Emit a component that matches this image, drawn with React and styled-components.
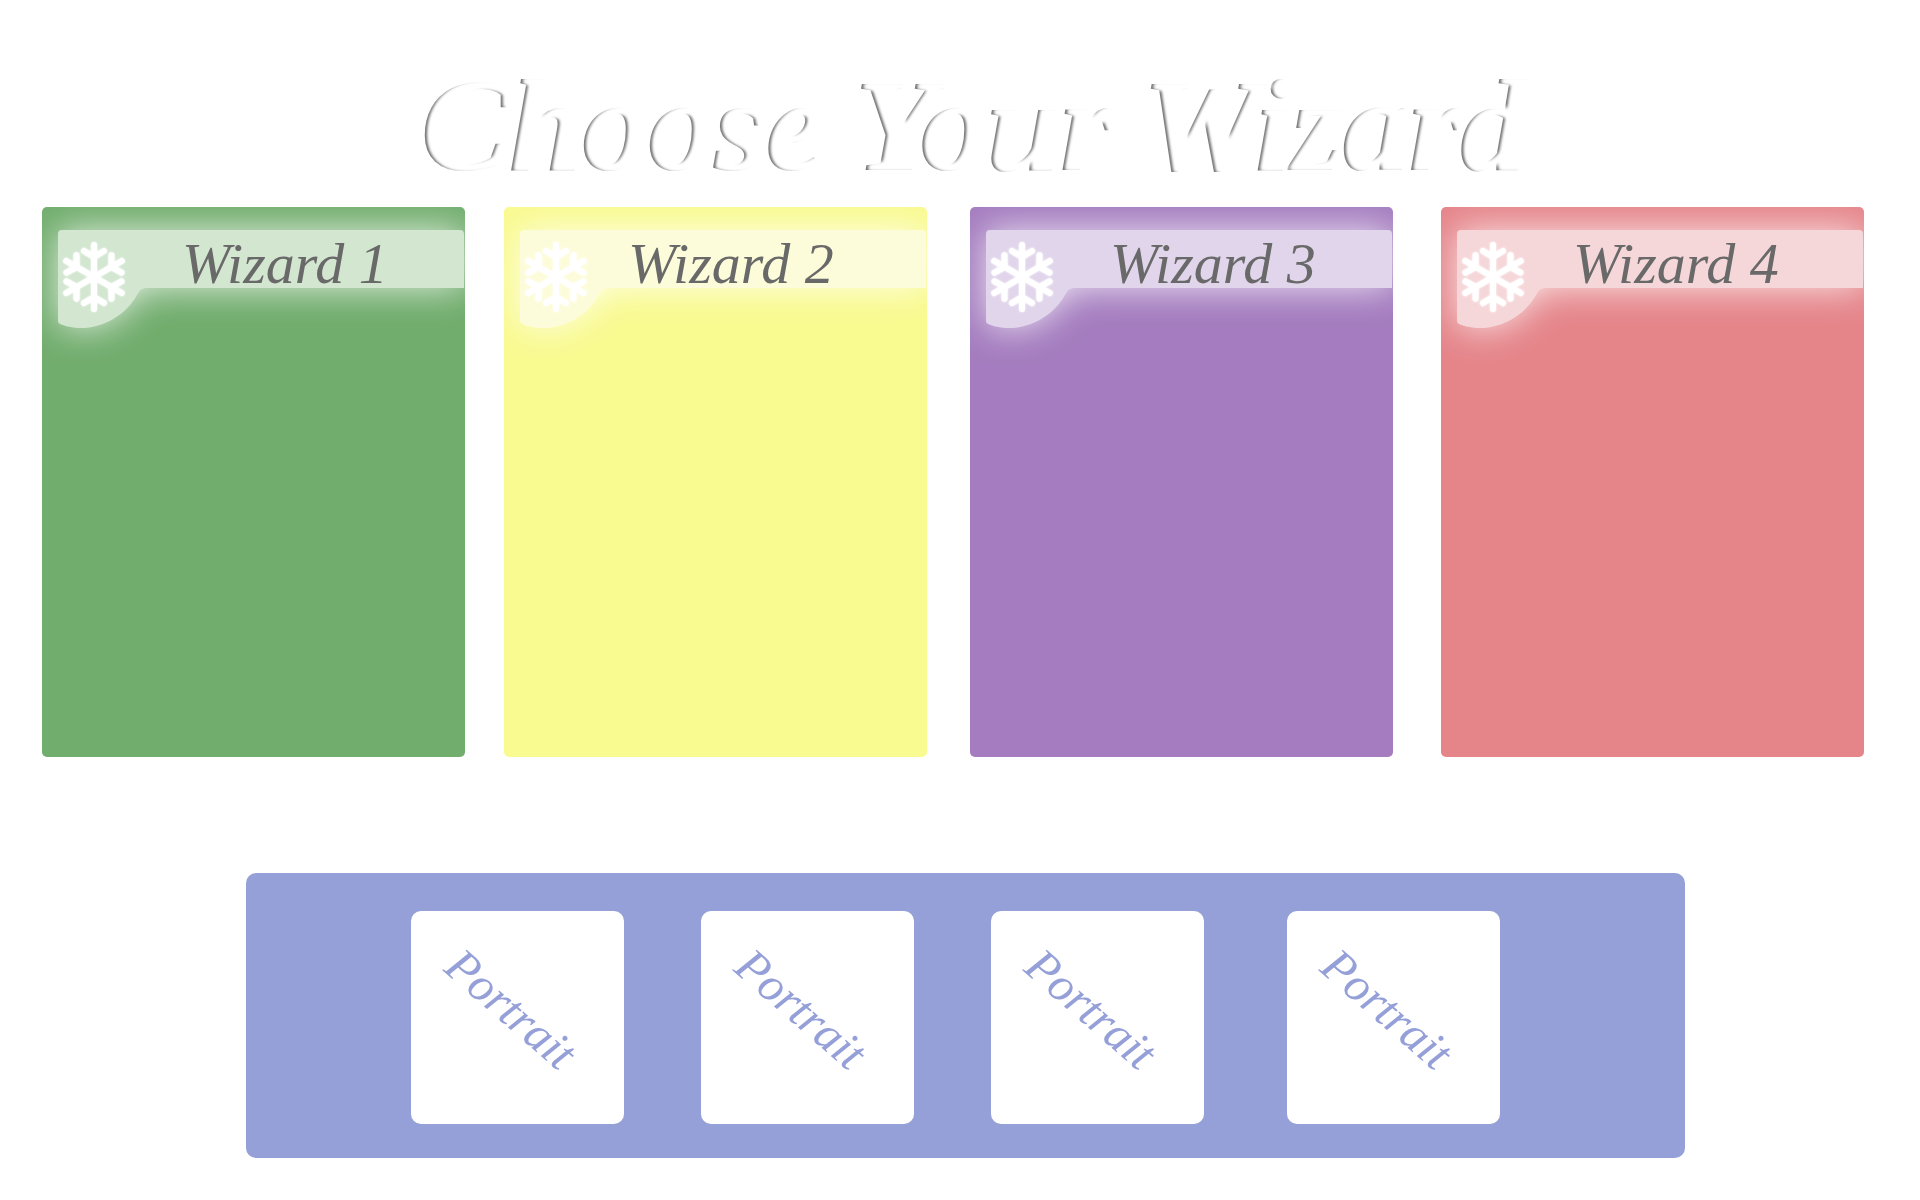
import React from "react";
import styled, { createGlobalStyle } from "styled-components";

const script = '"Liberation Serif", serif';

const GlobalStyle = createGlobalStyle`
  *, *::before, *::after { box-sizing: border-box; }
  body { margin: 0; background: #fff; font-family: ${script}; }
`;

const Page = styled.main`
  display: flex;
  flex-direction: column;
  padding: 48px 56px 42px 42px;
`;

const Title = styled.h1`
  margin: 0 0 0 40px;
  align-self: center;
  padding: 0 16px;
  font-size: 132px;
  font-style: italic;
  font-weight: 700;
  line-height: 155px;
  padding-bottom: 4px;
  white-space: nowrap;
  color: transparent;
  background: #707070;
  background-clip: text;
  -webkit-background-clip: text;
  text-shadow: 5px -1px 4px #fff, 4px -1px 4px #fff, 3px 0 3px #fff;
`;

const Cards = styled.ul`
  display: flex;
  margin: 0;
  padding: 0;
  list-style: none;
`;

const Card = styled.li`
  flex: 1;
  height: 550px;
  margin-right: ${(p) => p.$space}px;
  border-radius: 5px;
  overflow: hidden;
  background: ${(p) => p.$color};
`;

const CardHeader = styled.header`
  display: grid;
  grid-template-columns: 16px minmax(0, 1fr);
  padding-top: 23px;
`;

const Ribbon = styled.div`
  grid-area: 1 / 2;
  display: flex;
  height: 98px;
  filter: drop-shadow(0 0 18px rgba(255, 255, 255, 0.8));
`;

const RibbonCurl = styled.svg`
  flex: none;
  width: 90px;
  height: 98px;
  fill: ${(p) => p.$color};
`;

const RibbonBar = styled.div`
  flex: 1;
  height: 58px;
  margin-right: 1px;
  border-top-right-radius: 4px;
  background: ${(p) => p.$color};
`;

const Label = styled.div`
  grid-area: 1 / 1 / 2 / 3;
  z-index: 1;
  display: flex;
  height: 58px;
`;

const Flake = styled.svg`
  flex: none;
  width: 64px;
  height: 72px;
  margin: 11px 0 0 20px;
  stroke: #fff;
  fill: none;
  filter: drop-shadow(0 0 1px #fff);
`;

const Name = styled.h2`
  margin: 0 0 0 ${(p) => p.$inset}px;
  font-size: 58px;
  font-style: italic;
  font-weight: 400;
  line-height: 68px;
  white-space: nowrap;
  color: #696969;
`;

const Tray = styled.section`
  display: flex;
  justify-content: center;
  margin: 116px 179px 0 204px;
  padding: 38px 20px 34px 0;
  border-radius: 10px;
  background: #95a0d8;
`;

const Portrait = styled.button`
  display: grid;
  place-items: center;
  width: 213px;
  height: 213px;
  margin: 0 ${(p) => p.$space}px 0 0;
  padding: 0 12px 18px 0;
  border: 0;
  border-radius: 10px;
  background: #fff;
  color: #95a0d8;
  font: italic 48px ${script};
`;

const Slanted = styled.span`
  transform: rotate(41deg);
`;

const wizards = [
  { name: "Wizard 1", color: "#71ad6d", ribbon: "#d2e6d0", inset: 56, space: 39 },
  { name: "Wizard 2", color: "#f9fa8f", ribbon: "#fdfcda", inset: 40, space: 43 },
  { name: "Wizard 3", color: "#a47cbf", ribbon: "#e1d5eb", inset: 56, space: 48 },
  { name: "Wizard 4", color: "#e5858a", ribbon: "#f6d7d9", inset: 48, space: 0 },
];

const portraitSpaces = [77, 77, 83, 0];

function Snowflake() {
  return (
    <Flake viewBox="-32 -36 64 72" strokeWidth="6" strokeLinecap="round" aria-hidden="true">
      {[0, 60, 120, 180, 240, 300].map((angle) => (
        <g key={angle} transform={`rotate(${angle})`}>
          <path d="M0 0V-32M-10 -26L0 -20L10 -26" />
        </g>
      ))}
    </Flake>
  );
}

export default function App() {
  return (
    <>
      <GlobalStyle />
      <Page>
        <Title>Choose Your Wizard</Title>
        <Cards>
          {wizards.map((w) => (
            <Card key={w.name} $color={w.color} $space={w.space}>
              <CardHeader>
                <Ribbon>
                  <RibbonCurl $color={w.ribbon} viewBox="0 0 90 98" aria-hidden="true">
                    <path d="M4 0H90V58C83 58 82 60 79 65C64 91 38 98 24 98C14 98 7 96 2 94Q0 93 0 91V4Q0 0 4 0Z" />
                  </RibbonCurl>
                  <RibbonBar $color={w.ribbon} />
                </Ribbon>
                <Label>
                  <Snowflake />
                  <Name $inset={w.inset}>{w.name}</Name>
                </Label>
              </CardHeader>
            </Card>
          ))}
        </Cards>
        <Tray>
          {portraitSpaces.map((space, i) => (
            <Portrait key={i} type="button" $space={space}>
              <Slanted>Portrait</Slanted>
            </Portrait>
          ))}
        </Tray>
      </Page>
    </>
  );
}
